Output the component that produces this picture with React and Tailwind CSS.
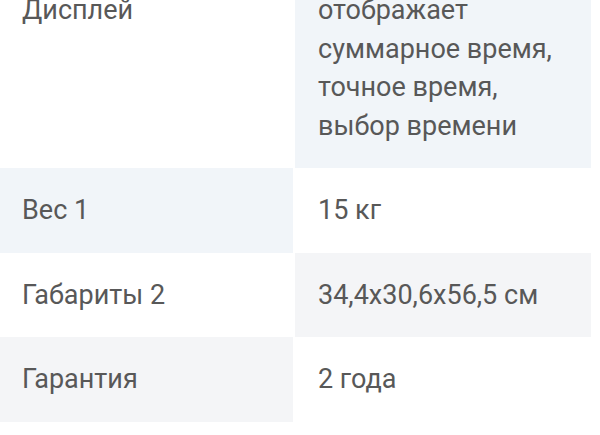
import { Fragment } from "react";

export default function App() {
  const blue = "bg-[#f1f5f9]";
  const gray = "bg-[#f4f5f7]";
  const cell = "px-[22px] py-[23px] text-[27px] leading-[38.5px] text-[#585858]";
  const rows = [
    { k: "Дисплей", v: ["отображает", "суммарное время,", "точное время,", "выбор времени"], kb: "bg-white", vb: blue },
    { k: "Вес 1", v: ["15 кг"], kb: blue, vb: "bg-white" },
    { k: "Габариты 2", v: ["34,4x30,6x56,5 см"], kb: "bg-white", vb: gray },
    { k: "Гарантия", v: ["2 года"], kb: gray, vb: "bg-white" },
  ];
  return (
    <div
      className="w-[600px] h-[435px] overflow-hidden bg-white"
      style={{ fontFamily: "Roboto, 'Noto Sans', sans-serif" }}
    >
      <div className="mt-[-32px] grid grid-cols-[293px_296px] gap-x-[2px]">
        {rows.map((r) => (
          <Fragment key={r.k}>
            <div className={`${cell} ${r.kb}`}>{r.k}</div>
            <div className={`${cell} pl-[23px] ${r.vb}`}>
              {r.v.map((l) => (
                <div key={l}>{l}</div>
              ))}
            </div>
          </Fragment>
        ))}
      </div>
    </div>
  );
}
